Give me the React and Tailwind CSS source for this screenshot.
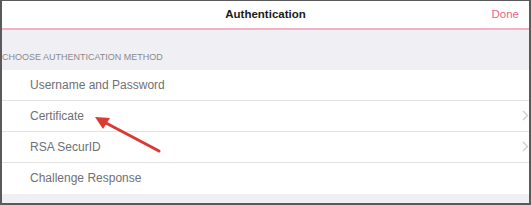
import React from "react";

const methods = [
  { label: "Username and Password", chevron: false },
  { label: "Certificate", chevron: true },
  { label: "RSA SecurID", chevron: true },
  { label: "Challenge Response", chevron: false },
];

function Chevron() {
  return (
    <svg width="7" height="11" viewBox="0 0 7 11" className="shrink-0">
      <path d="M1 1 L5.5 5.5 L1 10" fill="none" stroke="#cdcdd2" strokeWidth="1.4" />
    </svg>
  );
}

export default function App() {
  return (
    <div
      className="relative w-[531px] h-[205px] overflow-hidden border-t border-l-2 border-r-2 border-b-2 border-[#5a5a5a] bg-[#efeff4] flex flex-col"
      style={{ fontFamily: '"Liberation Sans", Arial, sans-serif' }}
    >
      <div className="h-[27px] shrink-0 bg-white flex items-center justify-center relative">
        <span className="text-[11.5px] font-bold text-[#1a1a1a]">Authentication</span>
        <span className="absolute right-[10px] text-[11.5px] text-[#e8678a]">Done</span>
      </div>
      <div className="h-[1.5px] shrink-0 bg-[#f0b3c4]" />

      <div className="h-[40px] shrink-0 flex items-end pb-[8px]">
        <span className="text-[9px] text-[#8a8a8f] leading-none">CHOOSE AUTHENTICATION METHOD</span>
      </div>

      <div className="bg-white flex flex-col">
        {methods.map((m, i) => (
          <div
            key={m.label}
            className={
              "h-[31px] flex items-center justify-between pl-[28px] " +
              (i < methods.length - 1 ? "border-b border-[#e3e3e6]" : "")
            }
          >
            <span className="text-[12px] text-[#707075]">{m.label}</span>
            {m.chevron && <Chevron />}
          </div>
        ))}
      </div>

      <svg
        className="absolute left-0 top-0 pointer-events-none"
        width="531"
        height="205"
        viewBox="0 0 531 205"
      >
        <line x1="157" y1="150" x2="104" y2="122" stroke="#d93b34" strokeWidth="3" strokeLinecap="round" />
        <polygon points="93,116 108,117 101,128" fill="#d93b34" />
      </svg>
    </div>
  );
}
